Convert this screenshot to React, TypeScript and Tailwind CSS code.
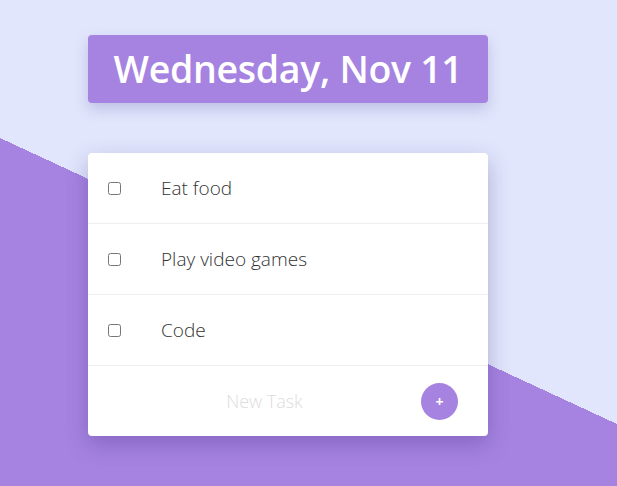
import { useState } from "react";

const tasks = ["Eat food", "Play video games", "Code"];

export default function App() {
  const [done, setDone] = useState<boolean[]>(tasks.map(() => false));
  const [draft, setDraft] = useState("");

  return (
    <div className="min-h-screen w-full bg-[linear-gradient(204.87deg,#e1e6fc_384.7px,#a683e1_384.7px)] font-['Open_Sans',sans-serif]">
      <div className="flex flex-col pl-[88px] pt-[35px]">
        {/* titulo */}
        <div className="w-[400px] h-[68px] flex items-center justify-center rounded bg-[#a683e1] shadow-[0_6px_14px_rgba(90,80,160,0.25)]">
          <h1 className="text-white font-semibold text-[37.5px] tracking-[-0.3px] leading-none">
            Wednesday, Nov 11
          </h1>
        </div>

        {/* lista */}
        <div className="mt-[50px] w-[400px] rounded bg-white shadow-[0_8px_22px_rgba(60,40,120,0.3)]">
          {tasks.map((task, i) => (
            <div
              key={task}
              className="flex items-center h-[71px] border-b border-[#eeeeee]"
            >
              <input
                type="checkbox"
                checked={done[i]}
                onChange={() =>
                  setDone(done.map((d, j) => (j === i ? !d : d)))
                }
                className="ml-[20px] w-[13px] h-[13px]"
              />
              <span className="ml-[40px] text-[19px] font-light text-[#333] leading-none">
                {task}
              </span>
            </div>
          ))}

          {/* nova tarefa */}
          <div className="flex items-center h-[70px] pl-[20px] pr-[30px]">
            <input
              value={draft}
              onChange={(e) => setDraft(e.target.value)}
              placeholder="New Task"
              className="flex-1 text-center text-[18px] font-light text-[#333] placeholder:text-[#dddddd] outline-none"
            />
            <button className="w-[37px] h-[37px] rounded-full bg-[#a683e1] text-white font-bold text-[14px] flex items-center justify-center">
              +
            </button>
          </div>
        </div>
      </div>
    </div>
  );
}
